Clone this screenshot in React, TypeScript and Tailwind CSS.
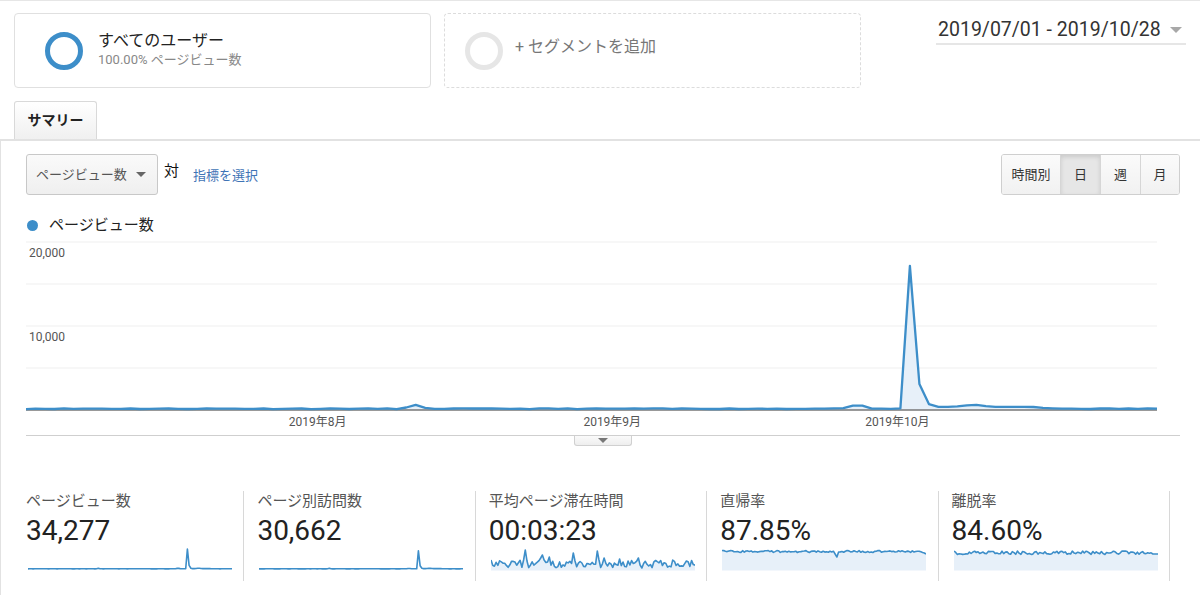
import React from "react";

const BLUE = "#3d8ec9";
const FILL = "#e7f0f9";

// simple seeded random so the noise is the same on every run
function rng(seed: number) {
  let s = seed;
  return () => {
    s = (s * 16807) % 2147483647;
    return (s - 1) / 2147483646;
  };
}

const pageviews: number[] = (() => {
  const r = rng(11);
  const v = Array.from({ length: 120 }, () => 110 + r() * 90);
  Object.assign(v, {
    40: 300, 41: 620, 42: 260,
    86: 220, 87: 520, 88: 520, 89: 170,
    93: 17150, 94: 3100, 95: 700,
    96: 380, 97: 380, 98: 430, 99: 560, 100: 610, 101: 450,
    102: 380, 103: 380, 104: 380, 105: 380, 106: 360, 107: 250,
  });
  return v;
})();

function toPath(ys: number[], w: number) {
  const step = w / (ys.length - 1);
  return ys.map((y, i) => `${i ? "L" : "M"}${(i * step).toFixed(1)} ${y.toFixed(1)}`).join(" ");
}

function toArea(ys: number[], w: number, base: number) {
  return `${toPath(ys, w)} L${w} ${base} L0 ${base} Z`;
}

const sparkPV = pageviews.map((v) => 23 - (v / 17150) * 20);
const sparkVisits = pageviews.map((v, i) => 23 - ((i === 93 ? 15600 : v * 0.9) / 17150) * 20);

const sparkTime: number[] = (() => {
  const r = rng(5);
  const v = Array.from({ length: 120 }, () => 14 + r() * 8);
  Object.assign(v, { 20: 4, 19: 14, 21: 15, 29: 12, 30: 9, 31: 14, 34: 11, 48: 7, 49: 15, 62: 5, 63: 14, 66: 12, 75: 13, 86: 12 });
  return v;
})();

const sparkBounce: number[] = (() => {
  const r = rng(23);
  const v = Array.from({ length: 120 }, () => 4.5 + r() * 2);
  Object.assign(v, { 66: 8, 67: 11, 68: 6, 117: 6.5, 118: 7, 119: 8 });
  return v;
})();

const sparkExit: number[] = (() => {
  const r = rng(41);
  return Array.from({ length: 120 }, (_, i) => (i > 115 ? 8 : 5 + r() * 3.5));
})();

function Spark({ ys, fill }: { ys: number[]; fill?: boolean }) {
  return (
    <svg width="204" height="26" viewBox="0 0 204 26" className="ml-[2px] block">
      {fill && <path d={toArea(ys, 204, 24.5)} fill={FILL} />}
      <path d={toPath(ys, 204)} fill="none" stroke={BLUE} strokeWidth="1.6" strokeLinejoin="round" />
    </svg>
  );
}

function MainChart() {
  const W = 1131;
  const base = 173;
  const ys = pageviews.map((v) => base - v * 0.0084);
  const step = W / 119;
  const months = [
    { i: 31, label: "2019年8月" },
    { i: 62, label: "2019年9月" },
    { i: 92, label: "2019年10月" },
  ];
  return (
    <svg width="1154" height="198" viewBox="0 0 1154 198" className="block">
      {[5, 47, 89, 131].map((y) => (
        <line key={y} x1="0" x2={W} y1={y} y2={y} stroke="#efefef" strokeWidth="1" />
      ))}
      <text x="3" y="20" fontSize="12" fill="#555">20,000</text>
      <text x="3" y="104" fontSize="12" fill="#555">10,000</text>
      <path d={toArea(ys, W, base)} fill={FILL} />
      <line x1="0" x2={W} y1={base} y2={base} stroke="#777" strokeWidth="1.5" />
      <path d={toPath(ys, W)} fill="none" stroke={BLUE} strokeWidth="2.3" strokeLinejoin="round" />
      {months.map((m) => (
        <text key={m.i} x={m.i * step - 3} y="189" fontSize="12" fill="#555" textAnchor="middle">
          {m.label}
        </text>
      ))}
    </svg>
  );
}

const metrics = [
  { label: "ページビュー数", value: "34,277", ys: sparkPV, fill: false },
  { label: "ページ別訪問数", value: "30,662", ys: sparkVisits, fill: false },
  { label: "平均ページ滞在時間", value: "00:03:23", ys: sparkTime, fill: true },
  { label: "直帰率", value: "87.85%", ys: sparkBounce, fill: true },
  { label: "離脱率", value: "84.60%", ys: sparkExit, fill: true },
];

export default function App() {
  return (
    <div
      className="h-[595px] w-[1200px] overflow-hidden border-t border-[#e6e6e6] bg-white text-[#333]"
      style={{ fontFamily: "Roboto, 'Noto Sans CJK JP', sans-serif" }}
    >
      {/* segments + date range */}
      <div className="flex items-start pl-[14px] pr-[14px] pt-[12px]">
        <div className="flex h-[75px] w-[417px] items-center rounded-[4px] border border-[#e0e0e0] pl-[30px]">
          <div className="h-[38px] w-[38px] rounded-full border-[5px] border-[#3d8ec9]" />
          <div className="mb-[2px] ml-[15px]">
            <div className="text-[16px] leading-[20px] text-[#222]">すべてのユーザー</div>
            <div className="text-[13px] leading-[18px] text-[#888]">100.00% ページビュー数</div>
          </div>
        </div>
        <div className="ml-[13px] flex h-[75px] w-[417px] items-center rounded-[4px] border border-dashed border-[#dcdcdc] pl-[20px]">
          <div className="h-[38px] w-[38px] rounded-full border-[5px] border-[#e6e6e6]" />
          <div className="mb-[8px] ml-[12px] text-[16px] text-[#777]">+ セグメントを追加</div>
        </div>
        <div className="ml-auto mt-[5px] flex w-[250px] items-center justify-between border-b-2 border-[#e6e6e6] pb-[2px] pl-[2px]">
          <span className="text-[19.5px] leading-[23px] text-[#333]">2019/07/01 - 2019/10/28</span>
          <span className="mr-[4px] h-0 w-0 border-x-[6px] border-t-[6px] border-x-transparent border-t-[#a8a8a8]" />
        </div>
      </div>

      {/* tab */}
      <div className="mt-[13px] pl-[14px]">
        <div className="flex h-[38px] w-[83px] items-center justify-center rounded-t-[3px] border border-b-0 border-[#d9d9d9] bg-linear-to-b from-white to-[#f0f0f0] text-[14px] font-bold text-[#222]">
          サマリー
        </div>
      </div>

      {/* panel */}
      <div className="h-[460px] border-l border-t-2 border-[#e2e2e2] pl-[25px] pr-[20px] pt-[13px]">
        <div className="flex items-start">
          <div className="flex h-[41px] w-[132px] items-center justify-between rounded-[3px] border border-[#c8c8c8] bg-linear-to-b from-[#fafafa] to-[#efefef] pl-[9px] pr-[11px]">
            <span className="text-[13px] text-[#555]">ページビュー数</span>
            <span className="h-0 w-0 border-x-[5px] border-t-[5px] border-x-transparent border-t-[#666]" />
          </div>
          <span className="ml-[6px] mt-[6px] text-[15px] text-[#111]">対</span>
          <span className="ml-[14px] mt-[12px] text-[13px] text-[#3f74b6]">指標を選択</span>
          <div className="ml-auto flex h-[41px] overflow-hidden rounded-[3px] border border-[#cfcfcf] text-[13px] text-[#333]">
            <div className="flex w-[58px] items-center justify-center bg-linear-to-b from-[#fbfbfb] to-[#f1f1f1]">時間別</div>
            <div className="flex w-[40px] items-center justify-center border-l border-[#d6d6d6] bg-[#e6e6e6] shadow-[inset_0_2px_4px_rgba(0,0,0,0.12)]">日</div>
            <div className="flex w-[40px] items-center justify-center border-l border-[#d6d6d6] bg-linear-to-b from-[#fbfbfb] to-[#f1f1f1]">週</div>
            <div className="flex w-[39px] items-center justify-center border-l border-[#d6d6d6] bg-linear-to-b from-[#fbfbfb] to-[#f1f1f1]">月</div>
          </div>
        </div>

        <div className="mt-[20px] flex h-[20px] items-center">
          <span className="ml-[1px] h-[11px] w-[11px] rounded-full bg-[#3d8ec9]" />
          <span className="ml-[11px] text-[15px] text-[#222]">ページビュー数</span>
        </div>

        <div className="mt-[2px] border-b border-[#cfcfcf]">
          <MainChart />
        </div>
        <div className="flex justify-center">
          <div className="flex h-[10px] w-[58px] items-center justify-center rounded-b-[3px] border border-t-0 border-[#d0d0d0] bg-linear-to-b from-[#fafafa] to-[#eeeeee]">
            <span className="h-0 w-0 border-x-[5px] border-t-[5px] border-x-transparent border-t-[#777]" />
          </div>
        </div>

        {/* metrics */}
        <div className="-ml-[13px] mt-[45px] grid w-[1157px] grid-cols-5">
          {metrics.map((m) => (
            <div key={m.label} className="h-[90px] border-r border-[#d8d8d8] pl-[13px]">
              <div className="text-[15px] leading-[20px] text-[#555]">{m.label}</div>
              <div className="mt-[5px] text-[28px] leading-[30px] text-[#222]">{m.value}</div>
              <Spark ys={m.ys} fill={m.fill} />
            </div>
          ))}
        </div>
      </div>
    </div>
  );
}
